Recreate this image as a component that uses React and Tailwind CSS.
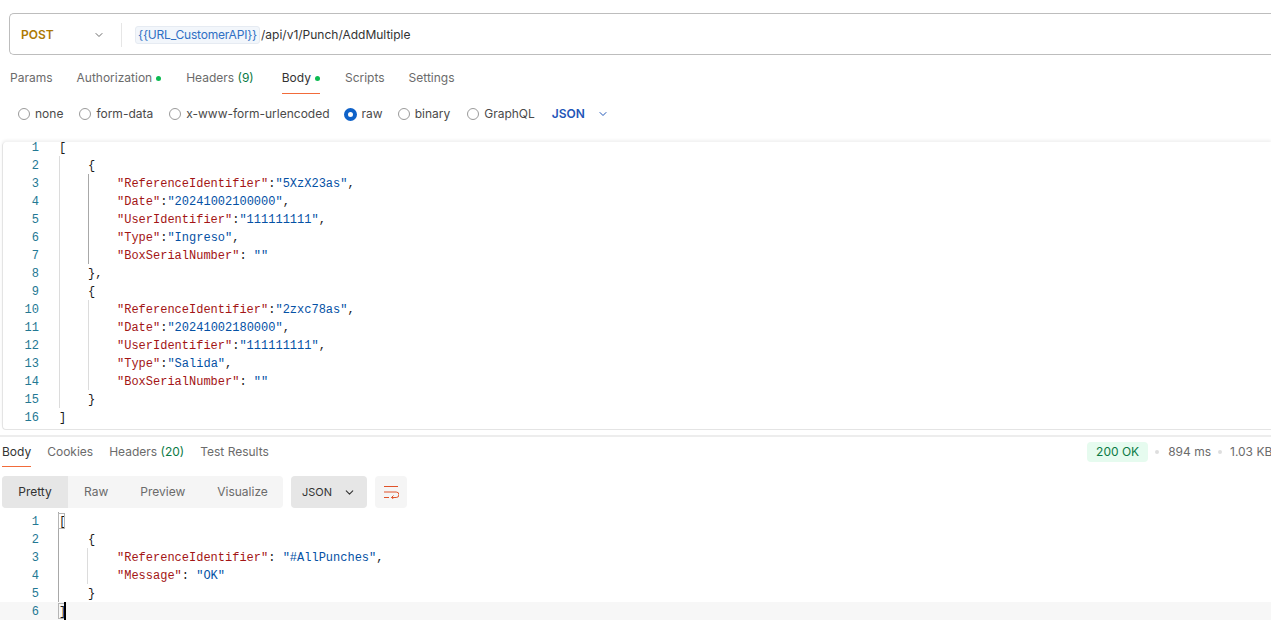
import React from 'react';
import { ChevronDown } from 'lucide-react';

const sans = "font-['Inter','Noto_Sans',sans-serif]";
const mono = "font-['Liberation_Mono','DejaVu_Sans_Mono',monospace]";

const Dot = () => <span className="w-[5px] h-[5px] rounded-full bg-[#0cbb52]" />;

const Radio = ({ label, checked, className = '' }) => (
    <div className={`flex items-center gap-[5px] ${className}`}>
        {checked
            ? <span className="w-[13px] h-[13px] rounded-full border-[4px] border-[#0f62c9] bg-white" />
            : <span className="w-[12px] h-[12px] rounded-full border border-[#9a9a9a] bg-white" />}
        <span className="text-[12px] text-[#4a4a4a]">{label}</span>
    </div>
);

// one line of the code editor
const Row = ({ n, indent = 0, active, low, children }) => (
    <div className={`flex h-[18px] items-center ${active ? 'bg-[#f7f7f7]' : ''} ${low ? 'pt-[2px]' : ''}`}>
        <span className="w-[39px] shrink-0 text-right text-[#237893]">{n}</span>
        <span className={`ml-[20px] whitespace-pre ${indent === 1 ? 'pl-[29px]' : indent === 2 ? 'pl-[58px]' : ''}`}>{children}</span>
    </div>
);

const K = ({ children }) => <span className="text-[#a31515]">{children}</span>;
const V = ({ children }) => <span className="text-[#0451a5]">{children}</span>;

const Pair = ({ n, k, v, colon = ':', comma }) => (
    <Row n={n} indent={2}><K>{k}</K>{colon}<V>{v}</V>{comma ? ',' : ''}</Row>
);

const Block = ({ start, id, date, type, closing }) => (
    <>
        <Row n={start} indent={1}>{'{'}</Row>
        <Pair n={start + 1} k={'"ReferenceIdentifier"'} v={`"${id}"`} comma />
        <Pair n={start + 2} k={'"Date"'} v={`"${date}"`} comma />
        <Pair n={start + 3} k={'"UserIdentifier"'} v={'"111111111"'} comma />
        <Pair n={start + 4} k={'"Type"'} v={`"${type}"`} comma />
        <Pair n={start + 5} k={'"BoxSerialNumber"'} colon=": " v={'""'} />
        <Row n={start + 6} indent={1}>{closing}</Row>
    </>
);

export default function App() {
    return (
        <div className={`w-[1271px] h-[632px] overflow-hidden bg-white ${sans}`}>
            {/* URL bar */}
            <div className="pl-[9px] pt-[13px]">
                <div className="h-[42px] pt-[1px] flex items-center border border-r-0 border-[#bdbdbd] rounded-l-[5px]">
                    <span className="ml-[11px] w-[72px] text-[12px] font-semibold text-[#ad7a03]">POST</span>
                    <ChevronDown size={12} className="text-[#6b6b6b]" />
                    <span className="ml-[16px] w-px h-[24px] bg-[#e6e6e6]" />
                    <span className="ml-[13px] h-[18px] flex items-center px-[2px] rounded-[3px] bg-[#f2f6fb] border border-[#e6ebf2] text-[12px] tracking-[-0.2px] text-[#2f6fc4]">{'{{URL_CustomerAPI}}'}</span>
                    <span className="ml-[1px] text-[12px] text-[#333]">/api/v1/Punch/AddMultiple</span>
                </div>
            </div>

            {/* Request tabs */}
            <div className="h-[38px] mt-[1px] pl-[10px] flex items-start pt-[13px] text-[12px] text-[#6b6b6b]">
                <span>Params</span>
                <span className="ml-[24px] flex items-center gap-[4px]">Authorization <Dot /></span>
                <span className="ml-[25px]">Headers <span className="text-[#0b7a45]">(9)</span></span>
                <span className="ml-[28px] relative flex items-center gap-[4px] text-[#333]">
                    Body <Dot />
                    <span className="absolute left-0 right-0 top-[24px] h-px bg-[#f26b3a]" />
                </span>
                <span className="ml-[25px]">Scripts</span>
                <span className="ml-[24px]">Settings</span>
            </div>

            {/* Body type */}
            <div className="h-[48px] pl-[18px] pb-[8px] flex items-center">
                <Radio label="none" />
                <Radio label="form-data" className="ml-[16px]" />
                <Radio label="x-www-form-urlencoded" className="ml-[16px]" />
                <Radio label="raw" checked className="ml-[14px]" />
                <Radio label="binary" className="ml-[15px]" />
                <Radio label="GraphQL" className="ml-[17px]" />
                <span className="ml-[17px] text-[12px] font-semibold text-[#1f56b8]">JSON</span>
                <ChevronDown size={12} className="ml-[12px] text-[#1f56b8]" />
            </div>

            {/* Request editor */}
            <div className={`relative flow-root ml-[2px] pb-[2px] border-l border-b border-[#e4e4e4] rounded-l-[4px] shadow-[0_-2px_3px_rgba(0,0,0,0.06)] text-[12px] text-[#1a1a1a] ${mono}`}>
                <span className="absolute left-[56px] top-[14px] h-[252px] w-px bg-[#dcdcdc]" />
                <span className="absolute left-[85px] top-[32px] h-[90px] w-px bg-[#a8a8a8]" />
                <span className="absolute left-[85px] top-[158px] h-[90px] w-px bg-[#dcdcdc]" />
                <div className="-ml-[3px] -mt-[3px]">
                    <Row n={1}>[</Row>
                    <Block start={2} id="5XzX23as" date="20241002100000" type="Ingreso" closing="}," />
                    <Block start={9} id="2zxc78as" date="20241002180000" type="Salida" closing="}" />
                    <Row n={16}>]</Row>
                </div>
            </div>

            <div className="h-[2px] mt-[5px] bg-[#ededed]" />

            {/* Response tabs */}
            <div className="h-[30px] pl-[2px] flex items-center justify-between text-[12px] text-[#6b6b6b]">
                <div className="flex items-center">
                    <span className="relative text-[#333]">
                        Body
                        <span className="absolute left-0 right-0 top-[23px] h-px bg-[#f26b3a]" />
                    </span>
                    <span className="ml-[16px]">Cookies</span>
                    <span className="ml-[16px]">Headers <span className="text-[#0b7a45]">(20)</span></span>
                    <span className="ml-[16px]">Test Results</span>
                </div>
                <div className="flex items-center whitespace-nowrap">
                    <span className="h-[20px] flex items-center px-[9px] rounded-[4px] bg-[#e6fbef] text-[#0b7a45]">200 OK</span>
                    <span className="ml-[7px] w-[4px] h-[4px] rounded-full bg-[#dedede]" />
                    <span className="ml-[9px]">894 ms</span>
                    <span className="ml-[7px] w-[4px] h-[4px] rounded-full bg-[#dedede]" />
                    <span className="ml-[8px] w-[41px] overflow-hidden">1.03 KB</span>
                </div>
            </div>

            {/* Response toolbar */}
            <div className="mt-[9px] pl-[2px] flex items-center gap-[8px] text-[12px]">
                <div className="h-[32px] w-[281px] flex items-center rounded-[4px] bg-[#f5f5f5] text-[#6b6b6b]">
                    <span className="h-full w-[66px] flex items-center justify-center rounded-l-[4px] bg-[#e6e6e6] text-[#333]">Pretty</span>
                    <span className="ml-[16px]">Raw</span>
                    <span className="ml-[32px]">Preview</span>
                    <span className="ml-[32px]">Visualize</span>
                </div>
                <div className="h-[32px] w-[76px] flex items-center justify-between px-[11px] rounded-[4px] bg-[#e6e6e6] text-[11px] text-[#333]">
                    JSON <ChevronDown size={13} className="text-[#333]" />
                </div>
                <div className="h-[32px] w-[32px] flex items-center justify-center rounded-[4px] bg-[#f5f5f5]">
                    <svg width="16" height="13" viewBox="0 0 16 13" fill="none" stroke="#e0532a" strokeWidth="1">
                        <path d="M1 0.5h14" />
                        <path d="M1 6h12.2a2.4 2.4 0 0 1 0 5.5H8.5" />
                        <path d="M10.5 9.5l-2 2 2 1.5" />
                        <path d="M1 11.5h5" />
                    </svg>
                </div>
            </div>

            {/* Response editor */}
            <div className={`relative mt-[4px] text-[12px] text-[#1a1a1a] ${mono}`}>
                <span className="absolute left-[58px] top-0 h-[108px] w-px bg-[#a8a8a8]" />
                <span className="absolute left-[87px] top-[36px] h-[36px] w-px bg-[#dcdcdc]" />
                <div className="relative">
                    <Row n={1} low>[</Row>
                    <Row n={2} low indent={1}>{'{'}</Row>
                    <Row n={3} low indent={2}><K>"ReferenceIdentifier"</K>: <V>"#AllPunches"</V>,</Row>
                    <Row n={4} low indent={2}><K>"Message"</K>: <V>"OK"</V></Row>
                    <Row n={5} low indent={1}>{'}'}</Row>
                    <Row n={6} low active>]</Row>
                </div>
                {/* matched brackets and the cursor sit on top of the text */}
                <span className="absolute left-[58px] top-[1px] h-[16px] w-[7px] border border-[#b5b5b5]" />
                <span className="absolute left-[58px] top-[91px] h-[16px] w-[7px] border border-[#b5b5b5]" />
                <span className="absolute left-[64px] top-[90px] h-[18px] w-[2px] bg-black" />
            </div>
        </div>
    );
}
